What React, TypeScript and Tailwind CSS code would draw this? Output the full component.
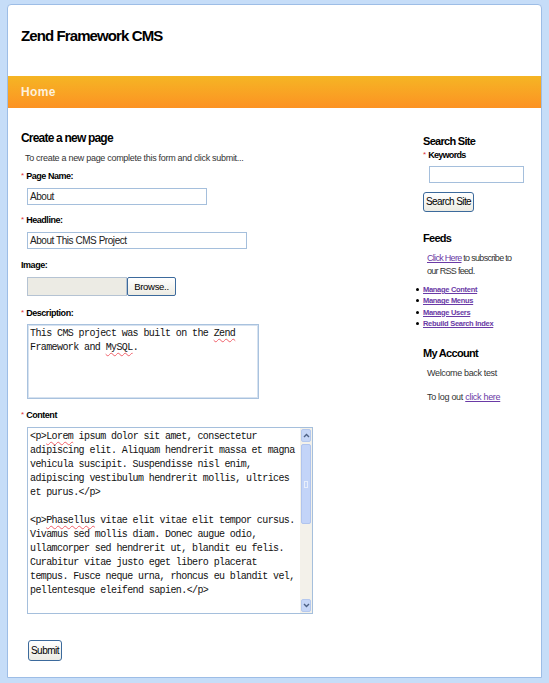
import React from "react";

const sans = "font-['Liberation_Sans',Arial,sans-serif]";
const mono = "font-['Liberation_Mono','Courier_New',monospace]";

function Req() {
  return <span className="text-[#e0353a] text-[8px] align-top mr-[2px] font-normal tracking-normal">*</span>;
}

function Wavy({ children }: { children: React.ReactNode }) {
  return (
    <span className="underline decoration-wavy decoration-[#f0606a] decoration-[1px] underline-offset-[2px]">
      {children}
    </span>
  );
}

const label = "text-[9px] leading-[12px] font-bold text-black tracking-[-0.45px]";
const field = "border border-[#a5bfdc] px-[2px] text-[10px] leading-[15px] tracking-[-0.45px] text-[#222]";
const btn = "border border-[#3c6a9c] bg-gradient-to-b from-white to-[#ecebe3] text-center text-black whitespace-nowrap";

const contentLines: React.ReactNode[] = [
  <>{"<p>"}<Wavy>Lorem</Wavy>{" ipsum dolor sit amet, consectetur"}</>,
  "adipiscing elit. Aliquam hendrerit massa et magna",
  "vehicula suscipit. Suspendisse nisl enim,",
  "adipiscing vestibulum hendrerit mollis, ultrices",
  "et purus.</p>",
  "\u00a0",
  <>{"<p>"}<Wavy>Phasellus</Wavy>{" vitae elit vitae elit tempor cursus."}</>,
  "Vivamus sed mollis diam. Donec augue odio,",
  "ullamcorper sed hendrerit ut, blandit eu felis.",
  "Curabitur vitae justo eget libero placerat",
  "tempus. Fusce neque urna, rhoncus eu blandit vel,",
  "pellentesque eleifend sapien.</p>",
];

export default function App() {
  return (
    <div className={`${sans} min-h-[683px] bg-[#c6ddf8] pl-[7px] pr-[7px] pt-[4px] text-[#222]`}>
      <div className="h-[674px] bg-white border border-[#9dbde6] rounded-t-[4px] overflow-hidden">
        {/* header */}
        <div className="h-[71px] pl-[13px] pt-[22px]">
          <h1 className="text-[15px] leading-[18px] font-bold text-black tracking-[-0.9px]">Zend Framework CMS</h1>
        </div>
        <div className="h-[32px] bg-gradient-to-b from-[#f5b524] to-[#fc9223] pl-[13px] flex items-center">
          <span className="text-[12px] font-bold text-[#fdf0dc] tracking-[0.4px]">Home</span>
        </div>

        <div className="flex">
          {/* main */}
          <div className="w-[407px] pl-[13px]">
            <h2 className="mt-[22px] text-[12px] leading-[16px] font-bold text-black tracking-[-0.8px]">Create a new page</h2>
            <p className="mt-[6px] pl-[4px] text-[9px] leading-[12px] text-[#333] tracking-[-0.3px]">
              To create a new page complete this form and click submit...
            </p>

            <div className={`mt-[6px] ${label}`}>
              <Req />Page Name:
            </div>
            <div className={`mt-[6px] ml-[6px] w-[180px] h-[17px] ${field}`}>About</div>

            <div className={`mt-[9px] ${label}`}>
              <Req />Headline:
            </div>
            <div className={`mt-[6px] ml-[6px] w-[220px] h-[17px] ${field}`}>About This CMS Project</div>

            <div className={`mt-[10px] ${label}`}>Image:</div>
            <div className="mt-[6px] ml-[6px] flex h-[19px]">
              <div className="w-[100px] h-[19px] bg-[#ecebe4] border border-[#b5c3d3]" />
              <div className={`w-[49px] h-[19px] rounded-[2px] text-[9.5px] leading-[17px] tracking-[-0.3px] ${btn}`}>
                Browse..
              </div>
            </div>

            <div className={`mt-[11px] ${label}`}>
              <Req />Description:
            </div>
            <div className={`${mono} mt-[5px] ml-[6px] w-[232px] h-[75px] border border-[#a9c2de] shadow-[inset_0_0_0_1px_#d6e2f0] px-[2px] pt-[2px] text-[10px] leading-[14px] tracking-[-0.6px] text-[#111] whitespace-pre`}>
              <div>{"This CMS project was built on the "}<Wavy>Zend</Wavy></div>
              <div>{"Framework and "}<Wavy>MySQL</Wavy>{"."}</div>
            </div>

            <div className={`mt-[10px] ${label}`}>
              <Req />Content
            </div>
            <div className="mt-[6px] ml-[6px] w-[286px] h-[187px] border border-[#a5bfdc] flex">
              <div className={`${mono} flex-1 px-[2px] pt-[2px] text-[10px] leading-[14px] tracking-[-0.6px] text-[#111] whitespace-pre`}>
                {contentLines.map((l, i) => (
                  <div key={i}>{l}</div>
                ))}
              </div>
              <div className="w-[12px] bg-[#f3f1ea] flex flex-col">
                <div className="h-[13px] m-[1px] mb-0 rounded-[2px] bg-[#c6d6f7] border border-[#b4c8ee] flex items-center justify-center">
                  <svg width="7" height="5" viewBox="0 0 7 5"><path d="M1 4 L3.5 1.5 L6 4" stroke="#4d6185" strokeWidth="1.4" fill="none" /></svg>
                </div>
                <div className="mt-[2px] mx-[1px] h-[80px] rounded-[2px] bg-[#c3d4f8] border border-[#b0c4ee] flex items-center justify-center">
                  <div className="w-[4px] h-[7px] border border-[#e8eefb]" />
                </div>
                <div className="flex-1" />
                <div className="h-[13px] m-[1px] mt-0 rounded-[2px] bg-[#c6d6f7] border border-[#b4c8ee] flex items-center justify-center">
                  <svg width="7" height="5" viewBox="0 0 7 5"><path d="M1 1 L3.5 3.5 L6 1" stroke="#4d6185" strokeWidth="1.4" fill="none" /></svg>
                </div>
              </div>
            </div>

            <div className={`mt-[26px] ml-[7px] w-[34px] h-[21px] rounded-[3px] text-[10px] leading-[19px] tracking-[-0.5px] ${btn}`}>
              Submit
            </div>
          </div>

          {/* sidebar */}
          <div className="flex-1 pl-[8px]">
            <h3 className="mt-[25px] text-[11px] leading-[16px] font-bold text-black tracking-[-0.7px]">Search Site</h3>
            <div className="text-[9px] leading-[12px] font-bold text-black tracking-[-0.7px]">
              <Req />Keywords
            </div>
            <div className="mt-[5px] ml-[6px] w-[95px] h-[17px] border border-[#a5bfdc]" />
            <div className={`mt-[9px] w-[51px] h-[20px] rounded-[3px] text-[10px] leading-[18px] tracking-[-0.6px] ${btn}`}>
              Search Site
            </div>

            <h3 className="mt-[18px] text-[11px] leading-[16px] font-bold text-black tracking-[-0.7px]">Feeds</h3>
            <div className="mt-[6px] pl-[4px] text-[9px] leading-[13px] text-[#333] tracking-[-0.7px] whitespace-nowrap">
              <div>
                <span className="underline text-[#6a3aa6]">Click Here</span> to subscribe to
              </div>
              <div>our RSS feed.</div>
            </div>
            <ul className="mt-[6px] -ml-[7px] text-[7.5px] leading-[11.3px] font-bold tracking-[-0.3px]">
              {["Manage Content", "Manage Menus", "Manage Users", "Rebuild Search Index"].map((t) => (
                <li key={t} className="flex items-center">
                  <span className="w-[3px] h-[3px] rounded-full bg-black mr-[4px]" />
                  <span className="underline text-[#6a3aa6]">{t}</span>
                </li>
              ))}
            </ul>

            <h3 className="mt-[16px] text-[11px] leading-[16px] font-bold text-black tracking-[-0.7px]">My Account</h3>
            <p className="mt-[6px] pl-[4px] text-[9px] leading-[12px] text-[#333] tracking-[-0.35px]">Welcome back test</p>
            <p className="mt-[12px] pl-[4px] text-[9px] leading-[12px] text-[#333] tracking-[-0.3px]">
              To log out <span className="underline text-[#6a3aa6]">click here</span>
            </p>
          </div>
        </div>
      </div>
    </div>
  );
}
